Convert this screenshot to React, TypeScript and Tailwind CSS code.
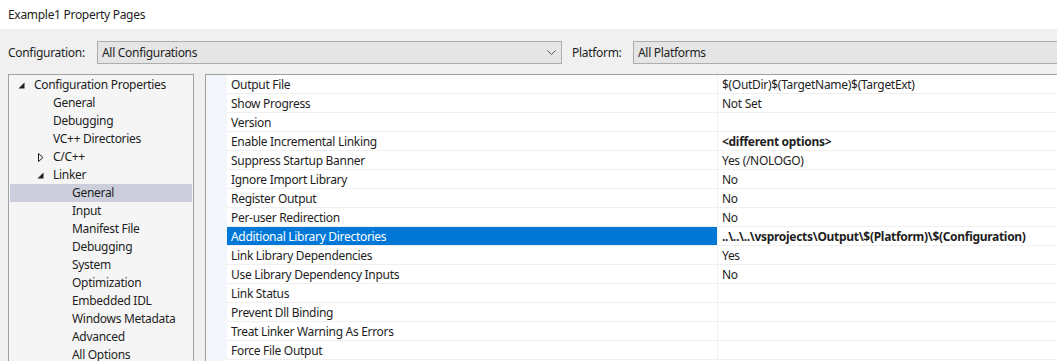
import React from "react";

const font = { fontFamily: '"Noto Sans", "Open Sans", sans-serif' };

type TreeItem = { label: string; level: number; arrow?: "open" | "closed"; selected?: boolean };

const tree: TreeItem[] = [
  { label: "Configuration Properties", level: 0, arrow: "open" },
  { label: "General", level: 1 },
  { label: "Debugging", level: 1 },
  { label: "VC++ Directories", level: 1 },
  { label: "C/C++", level: 1, arrow: "closed" },
  { label: "Linker", level: 1, arrow: "open" },
  { label: "General", level: 2, selected: true },
  { label: "Input", level: 2 },
  { label: "Manifest File", level: 2 },
  { label: "Debugging", level: 2 },
  { label: "System", level: 2 },
  { label: "Optimization", level: 2 },
  { label: "Embedded IDL", level: 2 },
  { label: "Windows Metadata", level: 2 },
  { label: "Advanced", level: 2 },
  { label: "All Options", level: 2 },
];

type Row = { label: string; value: string; bold?: boolean; selected?: boolean };

const rows: Row[] = [
  { label: "Output File", value: "$(OutDir)$(TargetName)$(TargetExt)" },
  { label: "Show Progress", value: "Not Set" },
  { label: "Version", value: "" },
  { label: "Enable Incremental Linking", value: "<different options>", bold: true },
  { label: "Suppress Startup Banner", value: "Yes (/NOLOGO)" },
  { label: "Ignore Import Library", value: "No" },
  { label: "Register Output", value: "No" },
  { label: "Per-user Redirection", value: "No" },
  {
    label: "Additional Library Directories",
    value: "..\\..\\..\\vsprojects\\Output\\$(Platform)\\$(Configuration)",
    bold: true,
    selected: true,
  },
  { label: "Link Library Dependencies", value: "Yes" },
  { label: "Use Library Dependency Inputs", value: "No" },
  { label: "Link Status", value: "" },
  { label: "Prevent Dll Binding", value: "" },
  { label: "Treat Linker Warning As Errors", value: "" },
  { label: "Force File Output", value: "" },
  { label: "", value: "" },
];

function Arrow({ kind }: { kind: "open" | "closed" }) {
  if (kind === "open") {
    return (
      <svg width="7" height="7" viewBox="0 0 7 7" className="block">
        <polygon points="6.5,0.5 6.5,6.5 0.5,6.5" fill="#1e1e1e" />
      </svg>
    );
  }
  return (
    <svg width="6" height="9" viewBox="0 0 6 9" className="block">
      <polygon points="0.5,0.5 5,4.5 0.5,8.5" fill="none" stroke="#1e1e1e" strokeWidth="1" />
    </svg>
  );
}

export default function App() {
  return (
    <div
      className="w-[1057px] h-[361px] overflow-hidden bg-[#f0f0f0] text-[12px] tracking-[-0.3px] text-[#1e1e1e] flex flex-col"
      style={font}
    >
      <div className="h-[29px] bg-white flex items-center pl-[8px] shrink-0">Example1 Property Pages</div>
      <div className="h-[45px] flex items-center shrink-0 pl-[8px] pt-[2px]">
        <span className="w-[89px]">Configuration:</span>
        <div className="w-[465px] h-[23px] border border-[#adadad] bg-[#e5e5e5] flex items-center pl-[4px] pr-[4px]">
          <span className="flex-1">All Configurations</span>
          <svg width="9" height="6" viewBox="0 0 9 6" className="mr-[1px]">
            <polyline points="0.5,0.5 4.5,4.5 8.5,0.5" fill="none" stroke="#555" strokeWidth="1" />
          </svg>
        </div>
        <span className="ml-[10px] w-[61px]">Platform:</span>
        <div className="flex-1 h-[23px] border border-[#adadad] border-r-0 bg-[#e5e5e5] flex items-center pl-[4px]">
          All Platforms
        </div>
      </div>
      <div className="flex-1 flex pl-[8px] gap-[11px] min-h-0">
        <div className="w-[186px] border border-[#a0a0a0] border-b-0 bg-[#f5f5f5] p-px">
          {tree.map((t, i) => (
            <div
              key={i}
              className={`h-[18px] flex items-center whitespace-nowrap ${t.selected ? "bg-[#cccedb]" : ""}`}
            >
              <div
                className={`shrink-0 flex items-center justify-end pr-[9px] ${
                  t.level === 0 ? "w-[24px]" : t.level === 1 ? "w-[43px]" : "w-[62px]"
                }`}
              >
                {t.arrow && <Arrow kind={t.arrow} />}
              </div>
              <span>{t.label}</span>
            </div>
          ))}
        </div>
        <div className="flex-1 border-l border-t border-[#a0a0a0] bg-white flex min-w-0">
          <div className="w-[21px] bg-[#f3f6fb] shrink-0" />
          <div className="flex-1 flex flex-col min-w-0">
            {rows.map((r, i) => (
              <div key={i} className="h-[19px] flex shrink-0 border-b border-[#f0f0f0]">
                <div
                  className={`w-[490px] shrink-0 flex items-center pl-[4px] pt-px whitespace-nowrap ${
                    r.selected ? "bg-[#0078d7] text-white" : ""
                  }`}
                >
                  {r.label}
                </div>
                <div
                  className={`flex-1 flex items-center pl-[4px] pt-px border-l border-[#f0f0f0] whitespace-nowrap ${
                    r.bold ? "font-bold" : ""
                  }`}
                >
                  {r.value}
                </div>
              </div>
            ))}
          </div>
        </div>
      </div>
    </div>
  );
}
